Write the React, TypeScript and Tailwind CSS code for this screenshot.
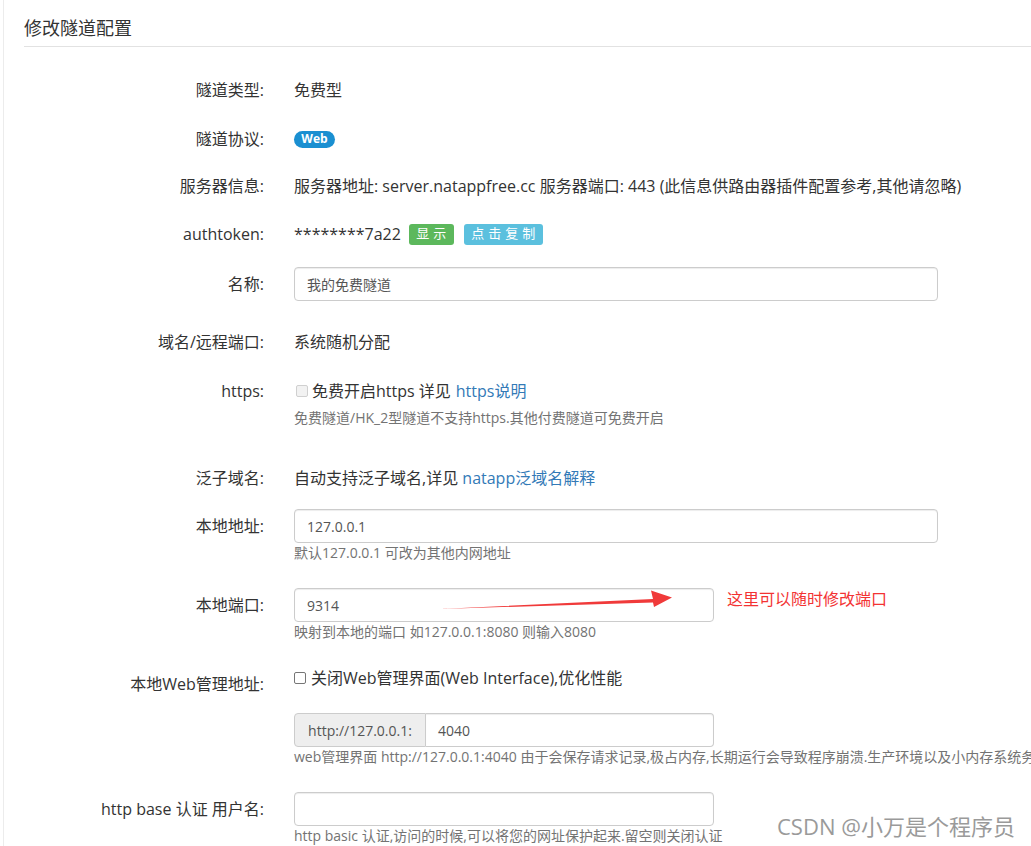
import React from "react";

const Label: React.FC<{ children: React.ReactNode; className?: string }> = ({ children, className }) => (
  <div className={"w-[240px] shrink-0 text-right leading-[34px] whitespace-nowrap " + (className || "")}>{children}</div>
);

const Help: React.FC<{ children: React.ReactNode }> = ({ children }) => (
  <div className="text-[14px] leading-[20px] text-[#737373] whitespace-nowrap">{children}</div>
);

const Input: React.FC<{ value: string; w: string }> = ({ value, w }) => (
  <div
    className={
      "h-[34px] border border-[#ccc] rounded-[4px] px-[12px] flex items-center text-[14px] text-[#555] shadow-[inset_0_1px_1px_rgba(0,0,0,0.075)] " +
      w
    }
  >
    {value}
  </div>
);

export default function App() {
  return (
    <div className="relative w-[1031px] h-[846px] overflow-hidden bg-white text-[16px] text-[#333] font-['Open_Sans','Noto_Sans_CJK_SC',sans-serif]">
      <div className="flex h-full">
        <div className="w-[3px] shrink-0" />
        <div className="flex-1 border-l border-[#ececec] pl-[20px]">
          <div className="pt-[16px] pb-[6px] leading-[24px] text-[18px] text-[#333] border-b border-[#e2e2e2]">修改隧道配置</div>

          {/* row 1 */}
          <div className="flex mt-[26px]">
            <Label>隧道类型:</Label>
            <div className="ml-[30px] leading-[34px]">免费型</div>
          </div>

          {/* row 2 */}
          <div className="flex mt-[15px]">
            <Label>隧道协议:</Label>
            <div className="ml-[30px] h-[34px] flex items-center">
              <span className="inline-flex items-center justify-center w-[41px] h-[17px] rounded-full bg-[#1a8fd1] text-white text-[12px] font-bold leading-none">
                Web
              </span>
            </div>
          </div>

          {/* row 3 */}
          <div className="flex mt-[13px]">
            <Label>服务器信息:</Label>
            <div className="ml-[30px] leading-[34px] whitespace-nowrap">
              服务器地址: server.natappfree.cc 服务器端口: 443 (此信息供路由器插件配置参考,其他请忽略)
            </div>
          </div>

          {/* row 4 */}
          <div className="flex mt-[14px]">
            <Label>authtoken:</Label>
            <div className="ml-[30px] h-[34px] flex items-center">
              <span>********7a22</span>
              <span className="ml-[8px] inline-flex items-center justify-center w-[45px] h-[21px] rounded-[3px] bg-[#5cb85c] text-white text-[13px] tracking-[4px] pl-[4px]">
                显示
              </span>
              <span className="ml-[10px] inline-flex items-center justify-center w-[79px] h-[21px] rounded-[3px] bg-[#5bc0de] text-white text-[13px] tracking-[4px] pl-[4px]">
                点击复制
              </span>
            </div>
          </div>

          {/* row 5 */}
          <div className="flex mt-[16px]">
            <Label>名称:</Label>
            <div className="ml-[30px]">
              <Input value="我的免费隧道" w="w-[644px]" />
            </div>
          </div>

          {/* row 6 */}
          <div className="flex mt-[24px]">
            <Label>域名/远程端口:</Label>
            <div className="ml-[30px] leading-[34px]">系统随机分配</div>
          </div>

          {/* row 7 */}
          <div className="flex mt-[15px]">
            <Label>https:</Label>
            <div className="ml-[30px]">
              <div className="h-[34px] flex items-center whitespace-nowrap">
                <span className="ml-[2px] mr-[4px] w-[12px] h-[12px] border border-[#d0d0d0] bg-[#f2f2f2] rounded-[2px]" />
                <span>免费开启https 详见 </span>
                <span className="ml-[5px] text-[#337ab7]">https说明</span>
              </div>
              <Help>免费隧道/HK_2型隧道不支持https.其他付费隧道可免费开启</Help>
            </div>
          </div>

          {/* row 8 */}
          <div className="flex mt-[33px]">
            <Label>泛子域名:</Label>
            <div className="ml-[30px] leading-[34px] whitespace-nowrap">
              自动支持泛子域名,详见 <span className="text-[#337ab7]">natapp泛域名解释</span>
            </div>
          </div>

          {/* row 9 */}
          <div className="flex mt-[14px]">
            <Label>本地地址:</Label>
            <div className="ml-[30px]">
              <Input value="127.0.0.1" w="w-[644px]" />
              <Help>默认127.0.0.1 可改为其他内网地址</Help>
            </div>
          </div>

          {/* row 10 */}
          <div className="flex mt-[25px]">
            <Label>本地端口:</Label>
            <div className="ml-[30px]">
              <div className="flex items-start">
                <Input value="9314" w="w-[420px]" />
                <span className="ml-[13px] leading-[22px] text-[16px] text-[#f33333] whitespace-nowrap">这里可以随时修改端口</span>
              </div>
              <Help>映射到本地的端口 如127.0.0.1:8080 则输入8080</Help>
            </div>
          </div>

          {/* row 11 */}
          <div className="flex mt-[19px]">
            <Label className="pt-[6px]">本地Web管理地址:</Label>
            <div className="ml-[30px]">
              <div className="h-[34px] flex items-center whitespace-nowrap">
                <span className="mr-[5px] w-[12px] h-[12px] border border-[#767676] bg-white rounded-[2px]" />
                <span>关闭Web管理界面(Web Interface),优化性能</span>
              </div>
              <div className="mt-[18px] flex h-[34px] w-[420px] text-[14px] text-[#555]">
                <div className="w-[132px] shrink-0 flex items-center justify-center bg-[#eee] border border-[#ccc] rounded-l-[4px]">
                  http://127.0.0.1:
                </div>
                <div className="flex-1 flex items-center px-[12px] border border-l-0 border-[#ccc] rounded-r-[4px] shadow-[inset_0_1px_1px_rgba(0,0,0,0.075)]">
                  4040
                </div>
              </div>
              <Help>web管理界面 http://127.0.0.1:4040 由于会保存请求记录,极占内存,长期运行会导致程序崩溃.生产环境以及小内存系统务必关闭此功能</Help>
            </div>
          </div>

          {/* row 12 */}
          <div className="flex mt-[25px]">
            <Label>http base 认证 用户名:</Label>
            <div className="ml-[30px]">
              <Input value="" w="w-[420px]" />
              <Help>http basic 认证,访问的时候,可以将您的网址保护起来.留空则关闭认证</Help>
            </div>
          </div>
        </div>
      </div>

      {/* annotation arrow */}
      <svg className="absolute left-[438px] top-[588px]" width="240" height="24" viewBox="0 0 240 24">
        <polygon points="2,21 215,11 213,2.5 234,9.5 216,19 215,14.5" fill="#f03a3a" />
      </svg>

      {/* watermark */}
      <div className="absolute left-[777px] top-[810px] text-[22px] leading-[32px] text-[#9a9a9a] whitespace-nowrap">
        CSDN @小万是个程序员
      </div>
    </div>
  );
}
